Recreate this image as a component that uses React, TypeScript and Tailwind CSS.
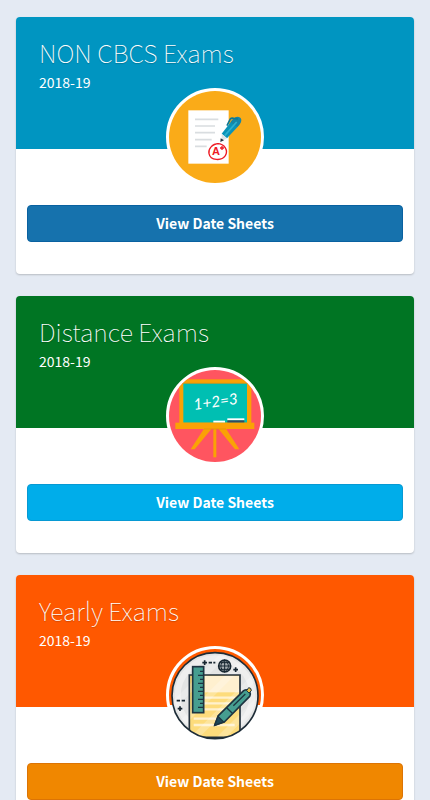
import type { ReactNode } from "react";

type Exam = {
  title: string;
  session: string;
  header: string;
  button: string;
  art: ReactNode;
};

const PaperArt = () => (
  <svg viewBox="29 29 276 276" className="block size-full" role="img" aria-label="Graded paper">
    <rect x="29" y="29" width="276" height="276" fill="#faab18" />
    <rect x="87" y="87" width="121" height="160" fill="#fff" />
    <g stroke="#d9dde0" strokeWidth="5">
      <path d="M107 114H177M107 134H167M107 154H167M107 175H157M107 195H142" />
    </g>
    <path d="M187 157L222 112L245 118L240 131L203 171Z" fill="#0a93b8" />
    <path d="M222 112Q232 103 243 109Q249 115 243 126L234 136L213 123Z" fill="#1585a6" />
    <path d="M196 163L232 122" stroke="#2db0cf" strokeWidth="5" />
    <path d="M203 133L213 113Q216 109 223 111L236 113" fill="none" stroke="#0a7897" strokeWidth="5" />
    <path d="M187 157L203 171L187 180Z" fill="#dfe5e8" />
    <path d="M184 171L194 177L183 182Z" fill="#26333f" />
    <path d="M179 187C157 188 146 204 149 217C153 238 187 240 198 223C207 207 197 188 174 187C166 187 161 190 157 194" fill="none" stroke="#ee1c25" strokeWidth="4" />
    <text x="158" y="221" fontSize="33" fontWeight="700" fill="#ee1c25" className="font-['Liberation_Sans',sans-serif]">A</text>
    <path d="M182 200H194M188 194V206" stroke="#ee1c25" strokeWidth="4" />
  </svg>
);

const BoardArt = () => (
  <svg viewBox="29 29 276 276" className="block size-full" role="img" aria-label="Blackboard">
    <rect x="29" y="29" width="276" height="276" fill="#ff5560" />
    <path d="M134 205H157L106 267H94ZM177 205H200L240 267H227Z" fill="#faa205" />
    <rect x="162" y="205" width="9" height="86" fill="#faa205" />
    <rect x="60" y="57" width="216" height="132" fill="#faa205" />
    <rect x="72" y="69" width="191" height="118" fill="#00bfb2" />
    <path d="M60 69H276" stroke="#df8d0d" strokeWidth="2" />
    <rect x="162" y="181" width="35" height="6" fill="#fff" />
    <rect x="204" y="174" width="51" height="6" fill="#fff" />
    <rect x="204" y="180" width="51" height="7" fill="#34495e" />
    <rect x="48" y="187" width="237" height="19" fill="#faa205" />
    <path d="M134 206H200" stroke="#df8d0d" strokeWidth="2" />
    <text x="105" y="149" fontSize="46" fontStyle="italic" fill="#fff" transform="rotate(-8 105 149)" className="font-['Lato',sans-serif]">1+2=3</text>
  </svg>
);

const StationeryArt = () => (
  <svg viewBox="29 29 276 276" className="block size-full" role="img" aria-label="Ruler, paper and pen">
    <defs>
      <clipPath id="stationery-disc">
        <circle cx="167" cy="169" r="129" />
      </clipPath>
    </defs>
    <path d="M29 29H305V197H29Z" fill="#ff5a00" />
    <path d="M29 197H305V305H29Z" fill="#fff" />
    <g clipPath="url(#stationery-disc)">
      <rect x="29" y="29" width="276" height="276" fill="#e3e4e4" />
      <circle cx="167" cy="169" r="112" fill="none" stroke="#eeeeee" strokeWidth="18" />
      <rect x="90" y="107" width="152" height="195" fill="#fddc7c" />
      <rect x="136" y="110" width="105" height="49" fill="#fff0cf" />
      <path d="M134 175H228M134 192H218M134 210H204M103 238H180M103 257H226" stroke="#fff1cd" strokeWidth="7" />
      <path d="M20 220L220 20M60 260L270 50M100 300L310 90M160 320L330 150" stroke="#fff" strokeOpacity="0.24" strokeWidth="20" />
      <path d="M90 310V107H242V310M90 294H242" fill="none" stroke="#24313c" strokeWidth="5" />
    </g>
    <circle cx="167" cy="169" r="129" fill="none" stroke="#1e2d38" strokeWidth="5" />
    <rect x="100" y="82" width="33" height="138" fill="#469e90" stroke="#1d3441" strokeWidth="5" />
    <path d="M133 96H122M133 108H116M133 120H122M133 132H116M133 144H122M133 156H116M133 168H122M133 180H116M133 192H122M133 204H116" stroke="#1d3441" strokeWidth="4" />
    <path d="M166 258L177 229L253 154Q262 148 268 155Q276 162 271 171L195 248Z" fill="#469e90" stroke="#1d3441" strokeWidth="5" strokeLinejoin="round" />
    <path d="M166 258L176 231L193 248Z" fill="#1d4858" stroke="#1d3441" strokeWidth="4" />
    <path d="M202 205L219 222M222 199L258 164" stroke="#1d3441" strokeWidth="4" />
    <path d="M262 154L268 145Q276 145 276 154L269 161Z" fill="#e9bd45" stroke="#1d3441" strokeWidth="3" />
    <circle cx="196" cy="80" r="18" fill="#a9b0b3" stroke="#172630" strokeWidth="5" />
    <path d="M179 80H213M196 62V98M183 70H209M183 90H209M196 62C181 73 181 88 196 98M196 62C211 73 211 88 196 98" fill="none" stroke="#172630" strokeWidth="3" />
    <path d="M129 70H143M136 63V77M148 70H158M162 70H168M222 91H236M229 84V98M52 184H62M67 184H77M55 208H69M62 201V215" stroke="#172630" strokeWidth="5" />
  </svg>
);

const exams: Exam[] = [
  {
    title: "NON CBCS Exams",
    session: "2018-19",
    header: "bg-[#0095c1]",
    button: "bg-[#1672ad] border-[#0961a0]",
    art: <PaperArt />,
  },
  {
    title: "Distance Exams",
    session: "2018-19",
    header: "bg-[#007523]",
    button: "bg-[#00adea] border-[#0799d3]",
    art: <BoardArt />,
  },
  {
    title: "Yearly Exams",
    session: "2018-19",
    header: "bg-[#ff5800]",
    button: "bg-[#f08700] border-[#dc7405]",
    art: <StationeryArt />,
  },
];

const ExamCard = ({ exam }: { exam: Exam }) => (
  <article className="rounded bg-white pb-8 shadow-[0_1px_2px_rgba(0,0,0,0.2)]">
    <header className={`relative h-33 rounded-t px-[23px] pt-5 text-white ${exam.header}`}>
      <h2 className="text-[25px] leading-[30px] font-thin [text-shadow:0_1px_1px_rgba(0,0,0,0.2)]">{exam.title}</h2>
      <p className="mt-1 text-sm leading-[22px]">{exam.session}</p>
      <div className="absolute inset-x-0 top-[71px] mx-auto size-[98px] overflow-hidden rounded-full border-3 border-white bg-white">
        {exam.art}
      </div>
    </header>
    <div className="px-[11px] pt-14">
      <button type="button" className={`block h-[37px] w-full rounded border pb-0.5 text-sm leading-5 font-bold text-white ${exam.button}`}>
        View Date Sheets
      </button>
    </div>
  </article>
);

export default function App() {
  return (
    <main className="flex min-h-screen flex-col gap-[22px] bg-[#e4eaf3] px-4 py-[17px] font-['Noto_Sans_CJK_SC',sans-serif]">
      {exams.map((exam) => (
        <ExamCard key={exam.title} exam={exam} />
      ))}
    </main>
  );
}
